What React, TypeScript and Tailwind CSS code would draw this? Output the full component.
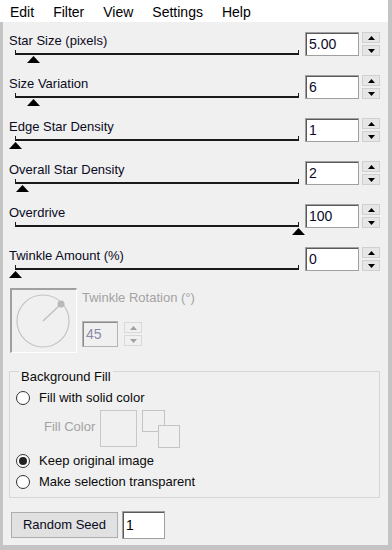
import React from "react";

const font = "font-['Liberation_Sans',Arial,sans-serif]";

function Arrow({ up, color }: { up: boolean; color: string }) {
  return (
    <svg width="7" height="4" viewBox="0 0 7 4">
      {up ? (
        <polygon points="3.5,0 7,4 0,4" fill={color} />
      ) : (
        <polygon points="0,0 7,0 3.5,4" fill={color} />
      )}
    </svg>
  );
}

function Spinner({ disabled = false }: { disabled?: boolean }) {
  const c = disabled ? "#a0a0a0" : "#000";
  const face = disabled
    ? "bg-[#f0f0f0] border-[#d9d9d9]"
    : "bg-[#e6e6e6] border-[#d0d0d0]";
  return (
    <div className="flex w-[18px] flex-col gap-[2px]">
      <div className={`flex h-[11px] items-center justify-center border ${face}`}>
        <Arrow up color={c} />
      </div>
      <div className={`flex h-[11px] items-center justify-center border ${face}`}>
        <Arrow up={false} color={c} />
      </div>
    </div>
  );
}

function Thumb({ left }: { left: number }) {
  return (
    <svg
      className="absolute top-[6px]"
      style={{ left }}
      width="13"
      height="7"
      viewBox="0 0 13 7"
    >
      <polygon points="6.5,0 13,7 0,7" fill="#000" />
    </svg>
  );
}

function SliderRow({
  label,
  value,
  thumb,
}: {
  label: string;
  value: string;
  thumb: number;
}) {
  return (
    <div className="flex h-[43px]">
      <div className="w-[302px] pl-[6px] pt-[3px]">
        <div className="h-[16px] text-[13px] leading-[16px] text-[#0a0a1e]">{label}</div>
        <div className="relative ml-[6px] h-[14px] w-[284px]">
          <div className="mt-[1px] h-[5px] border-x border-b-2 border-[#1a1a1a]" />
          <Thumb left={thumb - 6.5} />
        </div>
      </div>
      <div className="pt-[2px]">
        <div className="h-[24px] w-[54px] border border-[#a0a0a0] bg-white pl-[3px] text-[14px] leading-[22px] text-[#0a0a28] shadow-[inset_1px_1px_0_#5a5a5a]">
          {value}
        </div>
      </div>
      <div className="ml-[3px] pt-[2px]">
        <Spinner />
      </div>
    </div>
  );
}

function Radio({ checked, label }: { checked: boolean; label: string }) {
  return (
    <div className="flex h-[16px] items-center pl-[6px]">
      <div className="flex h-[14px] w-[14px] items-center justify-center rounded-full border border-[#333] bg-white">
        {checked && <div className="h-[8px] w-[8px] rounded-full bg-[#222]" />}
      </div>
      <div className="ml-[9px] text-[13px] leading-[16px] text-[#0a0a0a]">{label}</div>
    </div>
  );
}

export default function App() {
  const rows = [
    { label: "Star Size (pixels)", value: "5.00", thumb: 18 },
    { label: "Size Variation", value: "6", thumb: 18 },
    { label: "Edge Star Density", value: "1", thumb: 0 },
    { label: "Overall Star Density", value: "2", thumb: 7 },
    { label: "Overdrive", value: "100", thumb: 283 },
    { label: "Twinkle Amount (%)", value: "0", thumb: 0 },
  ];
  return (
    <div className={`${font} h-[550px] w-[392px] bg-[#c4c4c4] pb-[5px] pr-[4px]`}>
      <div className="flex h-full flex-col bg-[#f0f0f0]">
        <div className="flex h-[22px] gap-[19px] bg-white pl-[10px] pt-[1px] text-[14px] leading-[22px] text-black">
          <span>Edit</span>
          <span>Filter</span>
          <span>View</span>
          <span>Settings</span>
          <span>Help</span>
        </div>
        <div className="flex-1 border-l-[3px] border-[#c4c4c4] pt-[8px]">
          {rows.map((r) => (
            <SliderRow key={r.label} {...r} />
          ))}

          <div className="flex pl-[7px]">
            <div className="h-[65px] w-[67px] border-b border-l-2 border-r border-t-2 border-b-white border-l-[#a0a0a0] border-r-white border-t-[#a0a0a0]">
              <svg width="64" height="62" viewBox="0 0 64 62">
                <circle cx="31" cy="31" r="26" fill="none" stroke="#c4c4c4" strokeWidth="1.2" />
                <line x1="31" y1="31" x2="49" y2="14" stroke="#c0c0c0" strokeWidth="1.5" />
                <circle cx="49" cy="14" r="3.5" fill="#b8b8b8" />
              </svg>
            </div>
            <div className="ml-[5px] pt-[2px]">
              <div className="h-[16px] text-[13px] leading-[16px] text-[#a3a3a3]">
                Twinkle Rotation (°)
              </div>
              <div className="mt-[15px] flex">
                <div className="h-[26px] w-[36px] border border-[#b4b4b4] bg-[#f0f0f0] pl-[3px] text-[14px] leading-[24px] text-[#8a8aa8] shadow-[inset_1px_1px_0_#8a8a8a]">
                  45
                </div>
                <div className="ml-[6px] mt-[1px]">
                  <Spinner disabled />
                </div>
              </div>
            </div>
          </div>

          <div className="relative ml-[6px] mt-[18px] h-[127px] w-[371px] border border-[#d6d6d6]">
            <div className="absolute left-[9px] top-[-3px] bg-[#f0f0f0] px-[2px] text-[13px] leading-[16px] text-[#0a0a0a]">
              Background Fill
            </div>
            <div className="pt-[18px]">
              <Radio checked={false} label="Fill with solid color" />
              <div className="mt-[4px] flex">
                <div className="w-[90px] pl-[34px] pt-[9px] text-[13px] leading-[16px] text-[#a3a3a3]">
                  Fill Color
                </div>
                <div className="h-[37px] w-[37px] border border-[#c8c8c8]" />
                <div className="relative ml-[5px] h-[38px] w-[38px]">
                  <div className="absolute left-0 top-0 h-[22px] w-[23px] border border-[#c4c4c4] bg-[#f0f0f0]" />
                  <div className="absolute left-[16px] top-[15px] h-[23px] w-[22px] border border-[#c4c4c4] bg-[#f0f0f0]" />
                </div>
              </div>
              <div className="mt-[5px]">
                <Radio checked label="Keep original image" />
              </div>
              <div className="mt-[5px]">
                <Radio checked={false} label="Make selection transparent" />
              </div>
            </div>
          </div>

          <div className="mt-[14px] flex pl-[8px]">
            <div className="flex h-[26px] w-[107px] items-center justify-center border border-[#adadad] bg-[#e1e1e1] text-[13px] text-[#0a0a1e]">
              Random Seed
            </div>
            <div className="ml-[4px] mt-[-1px] h-[28px] w-[43px] border border-[#a0a0a0] bg-white pl-[3px] text-[14px] leading-[26px] text-black shadow-[inset_1px_1px_0_#5a5a5a]">
              1
            </div>
          </div>
        </div>
      </div>
    </div>
  );
}
